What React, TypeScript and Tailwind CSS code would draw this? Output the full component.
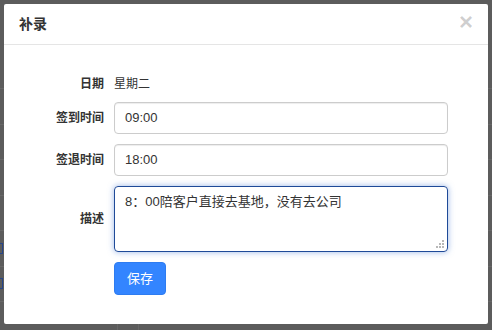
import React from "react";

const font = { fontFamily: '"Liberation Sans", "Noto Sans CJK SC", sans-serif' };

export default function App() {
  const lines = [88, 124, 159, 195, 230, 266, 301];
  return (
    <div className="relative w-[492px] h-[330px] bg-[#5c5c5c] overflow-hidden" style={font}>
      {lines.map((y) => (
        <div key={y} className="absolute left-0 w-[492px] h-px bg-[#676767]" style={{ top: y }} />
      ))}
      <div className="absolute left-[117px] top-[324px] w-px h-[6px] bg-[#676767]" />
      <div className="absolute left-[138px] top-[324px] w-px h-[6px] bg-[#676767]" />
      <div className="absolute left-[-6px] top-[243px] w-[9px] h-[11px] border border-[#27468a]" />
      <div className="absolute left-[-6px] top-[278px] w-[9px] h-[11px] border border-[#27468a]" />
      <div className="relative pt-[4px] pl-[4px]">
        <div className="w-[484px] h-[320px] bg-white rounded-[2px] flex flex-col">
          <div className="h-[41px] flex items-center justify-between pl-[15px] pr-[15px] border-b border-[#e5e5e5] shrink-0">
            <span className="text-[14px] font-bold text-[#333]">补录</span>
            <span className="text-[24px] font-bold leading-none text-black/20 -mt-[4px]">×</span>
          </div>
          <div className="flex flex-col gap-[10px] pt-[27px]">
            <div className="flex items-center h-[20px] pt-[4px]">
              <div className="w-[100px] text-right text-[12px] font-bold text-[#333]">日期</div>
              <div className="ml-[10px] text-[12px] text-[#333]">星期二</div>
            </div>
            <div className="flex items-center">
              <div className="w-[100px] text-right text-[12px] font-bold text-[#333]">签到时间</div>
              <div className="ml-[10px] w-[334px] h-[32px] border border-[#ccc] rounded-[4px] flex items-center px-[10px] text-[13px] text-[#333] shadow-[inset_0_1px_1px_rgba(0,0,0,0.075)]">09:00</div>
            </div>
            <div className="flex items-center">
              <div className="w-[100px] text-right text-[12px] font-bold text-[#333]">签退时间</div>
              <div className="ml-[10px] w-[334px] h-[32px] border border-[#ccc] rounded-[4px] flex items-center px-[10px] text-[13px] text-[#333] shadow-[inset_0_1px_1px_rgba(0,0,0,0.075)]">18:00</div>
            </div>
            <div className="flex items-center">
              <div className="w-[100px] text-right text-[12px] font-bold text-[#333]">描述</div>
              <div className="relative ml-[10px] w-[334px] h-[66px] border border-[#1f4a98] rounded-[4px] px-[10px] pt-[5px] text-[13px] text-[#333] shadow-[0_0_6px_rgba(70,120,210,0.55)]">
                8：00陪客户直接去基地，没有去公司
                <svg className="absolute right-[3px] bottom-[3px]" width="8" height="8" viewBox="0 0 8 8">
                  <rect x="6" y="0" width="2" height="2" fill="#b8b8b8" />
                  <rect x="3" y="3" width="2" height="2" fill="#b8b8b8" />
                  <rect x="6" y="3" width="2" height="2" fill="#b8b8b8" />
                  <rect x="0" y="6" width="2" height="2" fill="#b8b8b8" />
                  <rect x="3" y="6" width="2" height="2" fill="#b8b8b8" />
                  <rect x="6" y="6" width="2" height="2" fill="#b8b8b8" />
                </svg>
              </div>
            </div>
            <div className="flex">
              <div className="ml-[110px] w-[52px] h-[33px] rounded-[4px] bg-[#3385ff] border border-[#2e7cf0] flex items-center justify-center text-white text-[13px]">保存</div>
            </div>
          </div>
        </div>
      </div>
    </div>
  );
}
